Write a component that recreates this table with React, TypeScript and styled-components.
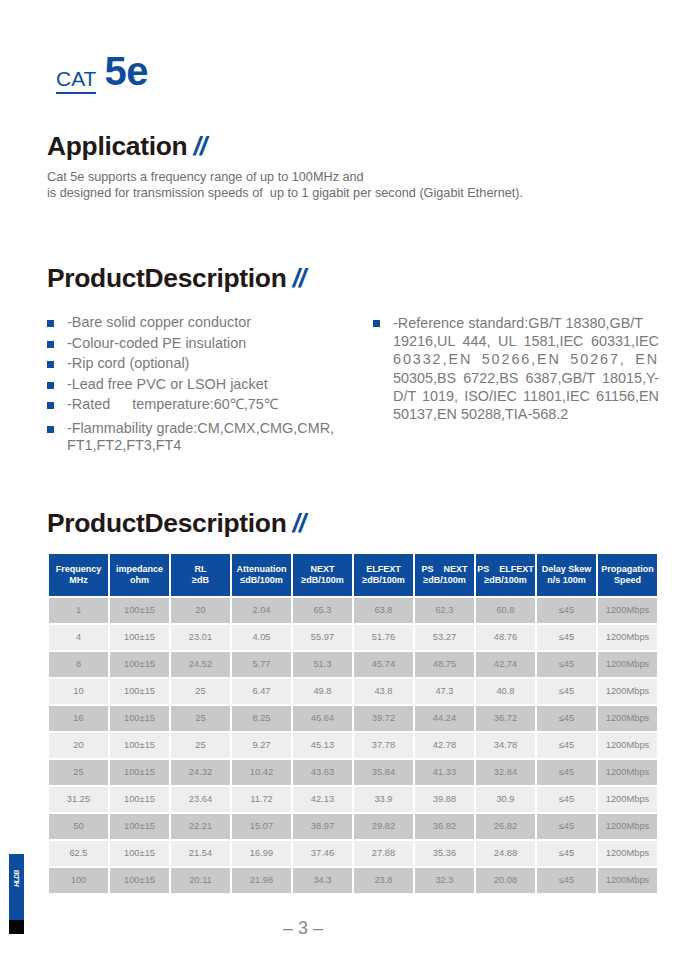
import styled, { createGlobalStyle } from 'styled-components';

const GlobalStyle = createGlobalStyle`
  html, body {
    margin: 0;
    padding: 0;
    background: #ffffff;
  }
  body {
    font-family: "Liberation Sans", Arial, sans-serif;
  }
`;

const BLUE = '#0e4d9d';

const Page = styled.div`
  position: relative;
  width: 675px;
  height: 960px;
  box-sizing: border-box;
  padding: 51px 0 0 47px;
  overflow: hidden;
`;

const CatTitle = styled.div`
  display: flex;
  align-items: flex-end;
  gap: 8px;
  margin-left: 9px;
  height: 40px;
`;

const CatLabel = styled.span`
  font-size: 21px;
  color: ${BLUE};
  line-height: 1;
  padding-bottom: 3px;
  border-bottom: 2px solid ${BLUE};
  margin-bottom: -3px;
  letter-spacing: 0;
`;

const CatNumber = styled.span`
  font-size: 40px;
  font-weight: 700;
  color: ${BLUE};
  line-height: 1;
  letter-spacing: -0.5px;
`;

const SectionTitle = styled.h2<{ $top: number }>`
  margin: ${p => p.$top}px 0 0 0;
  font-size: 26.4px;
  font-weight: 700;
  color: #231815;
  line-height: 30px;
  letter-spacing: -0.3px;
`;

const Slashes = styled.span`
  color: ${BLUE};
  font-style: italic;
  margin-left: 6px;
  letter-spacing: -1px;
`;

const Intro = styled.p`
  margin: 8px 0 0 0;
  font-size: 12.7px;
  line-height: 16px;
  color: #6d6d6d;
`;

const Columns = styled.div`
  display: grid;
  grid-template-columns: 306px 286px;
  gap: 20px;
  margin-top: 21px;
`;

const BulletList = styled.ul`
  list-style: none;
  margin: 0;
  padding: 0;
  display: flex;
  flex-direction: column;
  gap: 3px;
`;

const Bullet = styled.li<{ $loose?: boolean }>`
  display: flex;
  gap: 13px;
  font-size: 14.4px;
  line-height: ${p => (p.$loose ? '18.2px' : '17.5px')};
  color: #7a7a7a;

  &::before {
    content: '';
    flex: none;
    width: 7px;
    height: 7px;
    margin-top: 6px;
    background: ${BLUE};
  }
`;

const BulletText = styled.span`
  flex: 1;
  min-width: 0;
`;

const JustLine = styled.span<{ $spread?: number; $fill?: boolean }>`
  display: block;
  white-space: nowrap;
  text-align: ${p => (p.$fill ? 'justify' : 'left')};
  text-align-last: ${p => (p.$fill ? 'justify' : 'left')};
  letter-spacing: ${p => p.$spread ?? 0}px;
`;

const Gap = styled.span`
  display: inline-block;
  width: 22px;
`;

const Table = styled.table`
  margin: 14px 0 0 0;
  border-collapse: separate;
  border-spacing: 2px;
  width: 612px;
  table-layout: fixed;
`;

const HeadCell = styled.th`
  background: ${BLUE};
  color: #ffffff;
  font-size: 9px;
  font-weight: 700;
  line-height: 11px;
  height: 42px;
  padding: 0 1px;
  text-align: center;
  vertical-align: middle;
  white-space: pre;
`;

const Row = styled.tr<{ $dark: boolean }>`
  td {
    background: ${p => (p.$dark ? '#c9c9c9' : '#eeeeee')};
  }
`;

const Cell = styled.td`
  height: 25px;
  padding: 0;
  font-size: 9.3px;
  color: #858585;
  text-align: center;
  vertical-align: middle;
`;

const PageNumber = styled.div`
  margin: 23px 0 0 236px;
  font-size: 18px;
  color: #8a8a8a;
`;

const SideTab = styled.div`
  position: absolute;
  left: 9px;
  top: 854px;
  width: 15px;
  height: 80px;
  display: flex;
  flex-direction: column;
`;

const TabBlue = styled.div`
  flex: 1;
  background: ${BLUE};
  display: flex;
  align-items: flex-start;
  justify-content: center;
  padding-top: 16px;
`;

const TabBlack = styled.div`
  height: 14px;
  background: #050505;
`;

const TabLogo = styled.span`
  writing-mode: vertical-rl;
  transform: rotate(180deg);
  color: #ffffff;
  font-size: 6.5px;
  font-weight: 700;
  font-style: italic;
  letter-spacing: -0.3px;
`;

const headers = [
  'Frequency\nMHz',
  'impedance\nohm',
  'RL\n≥dB',
  'Attenuation\n≤dB/100m',
  'NEXT\n≥dB/100m',
  'ELFEXT\n≥dB/100m',
  'PS    NEXT\n≥dB/100m',
  'PS    ELFEXT\n≥dB/100m',
  'Delay Skew\nn/s 100m',
  'Propagation\nSpeed',
];

const rows = [
  ['1', '100±15', '20', '2.04', '65.3', '63.8', '62.3', '60.8'],
  ['4', '100±15', '23.01', '4.05', '55.97', '51.76', '53.27', '48.76'],
  ['8', '100±15', '24.52', '5.77', '51.3', '45.74', '48.75', '42.74'],
  ['10', '100±15', '25', '6.47', '49.8', '43.8', '47.3', '40.8'],
  ['16', '100±15', '25', '8.25', '46.64', '39.72', '44.24', '36.72'],
  ['20', '100±15', '25', '9.27', '45.13', '37.78', '42.78', '34.78'],
  ['25', '100±15', '24.32', '10.42', '43.63', '35.84', '41.33', '32.84'],
  ['31.25', '100±15', '23.64', '11.72', '42.13', '33.9', '39.88', '30.9'],
  ['50', '100±15', '22.21', '15.07', '38.97', '29.82', '36.82', '26.82'],
  ['62.5', '100±15', '21.54', '16.99', '37.46', '27.88', '35.36', '24.88'],
  ['100', '100±15', '20.11', '21.98', '34.3', '23.8', '32.3', '20.08'],
];

export default function App() {
  return (
    <>
      <GlobalStyle />
      <Page>
        <CatTitle>
          <CatLabel>CAT</CatLabel>
          <CatNumber>5e</CatNumber>
        </CatTitle>

        <SectionTitle $top={40}>
          Application<Slashes>//</Slashes>
        </SectionTitle>
        <Intro>
          Cat 5e supports a frequency range of up to 100MHz and
          <br />
          is designed for transmission speeds of&nbsp; up to 1 gigabit per second (Gigabit Ethernet).
        </Intro>

        <SectionTitle $top={62}>
          ProductDescription<Slashes>//</Slashes>
        </SectionTitle>
        <Columns>
          <BulletList>
            <Bullet>
              <BulletText>-Bare solid copper conductor</BulletText>
            </Bullet>
            <Bullet>
              <BulletText>-Colour-coded PE insulation</BulletText>
            </Bullet>
            <Bullet>
              <BulletText>-Rip cord (optional)</BulletText>
            </Bullet>
            <Bullet>
              <BulletText>-Lead free PVC or LSOH jacket</BulletText>
            </Bullet>
            <Bullet>
              <BulletText>
                -Rated<Gap />temperature:60℃,75℃
              </BulletText>
            </Bullet>
            <Bullet style={{ marginTop: 3 }}>
              <BulletText>-Flammability grade:CM,CMX,CMG,CMR, FT1,FT2,FT3,FT4</BulletText>
            </Bullet>
          </BulletList>
          <BulletList>
            <Bullet $loose>
              <BulletText>
                <JustLine>-Reference standard:GB/T 18380,GB/T</JustLine>
                <JustLine $fill>19216,UL 444, UL 1581,IEC 60331,IEC</JustLine>
                <JustLine $fill $spread={1.9}>60332,EN 50266,EN 50267, EN</JustLine>
                <JustLine $fill>50305,BS 6722,BS 6387,GB/T 18015,Y-</JustLine>
                <JustLine $fill>D/T 1019, ISO/IEC 11801,IEC 61156,EN</JustLine>
                <JustLine>50137,EN 50288,TIA-568.2</JustLine>
              </BulletText>
            </Bullet>
          </BulletList>
        </Columns>

        <SectionTitle $top={53}>
          ProductDescription<Slashes>//</Slashes>
        </SectionTitle>

        <Table>
          <thead>
            <tr>
              {headers.map(h => (
                <HeadCell key={h}>{h}</HeadCell>
              ))}
            </tr>
          </thead>
          <tbody>
            {rows.map((r, i) => (
              <Row key={r[0]} $dark={i % 2 === 0}>
                {r.map((v, j) => (
                  <Cell key={j}>{v}</Cell>
                ))}
                <Cell>≤45</Cell>
                <Cell>1200Mbps</Cell>
              </Row>
            ))}
          </tbody>
        </Table>

        <PageNumber>– 3 –</PageNumber>

        <SideTab>
          <TabBlue>
            <TabLogo>HLDB</TabLogo>
          </TabBlue>
          <TabBlack />
        </SideTab>
      </Page>
    </>
  );
}
